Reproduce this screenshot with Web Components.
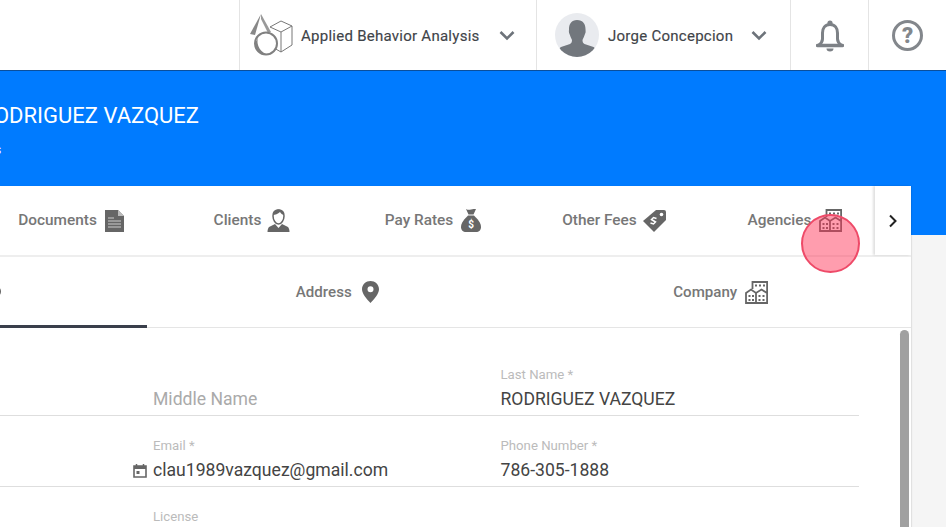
<!DOCTYPE html>
<html><head><meta charset="utf-8">
<style>
html,body{margin:0;padding:0;width:946px;height:527px;overflow:hidden;background:#f5f5f5;font-family:Roboto,"Liberation Sans",sans-serif}
</style></head><body>
<app-topbar></app-topbar>
<app-main></app-main>
<script>
const define=(name,html)=>{customElements.define(name,class extends HTMLElement{constructor(){super();this.attachShadow({mode:'open'}).innerHTML=html;}});};

const chev='<svg width="16" height="11" viewBox="0 0 16 11"><path d="M1.500 2 8 8.500 14.500 2" fill="none" stroke="#6d737a" stroke-width="2.600"/></svg>';
define('app-topbar',`<style>
:host{display:flex;justify-content:flex-end;height:71px;box-sizing:border-box;background:#fff;border-bottom:1px solid #0a4f9c}
.i{display:flex;align-items:center;border-left:1px solid #e4e4e4;box-sizing:border-box;height:70px}
.t{font:400 15px Roboto,sans-serif;color:#3f4449;letter-spacing:.26px;white-space:nowrap;margin-top:2px;-webkit-text-stroke:.15px #3f4449}
.a{width:297px;padding-left:10px}.b{width:254px;padding-left:18px}.c{width:78px;justify-content:center}.d{width:78px;justify-content:center}
.h{width:31px;height:31px;box-sizing:border-box;border:3px solid #83878c;border-radius:50%;display:flex;align-items:center;justify-content:center;font:900 22px Roboto,sans-serif;color:#83878c;margin-top:1px}
</style>
<div class="i a">
<svg width="43" height="42" viewBox="0 0 43 42" style="margin-right:8px"><g fill="none" stroke="#777" stroke-width="1"><path d="M20 13 31 7l11 5v19l-11 7-7-4"/><path d="M20 13l11 5 11-6M31 18v20"/></g><path d="M11 0 0 20l5 1z" fill="#888"/><path d="M11 0l10 18-3 1L11 5z" fill="#999"/><circle cx="16" cy="29.500" r="11" fill="#fff" stroke="#808080" stroke-width="2"/><path d="M5 29a12 12 0 0 0 14 11.500A13 13 0 0 1 8 24z" fill="#808080"/></svg>
<span class="t">Applied Behavior Analysis</span><span style="margin-left:19px;display:flex">${chev}</span></div>
<div class="i b">
<svg width="44" height="44" viewBox="0 0 44 44" style="margin-right:9px"><defs><clipPath id="k"><circle cx="22" cy="22" r="22"/></clipPath></defs><circle cx="22" cy="22" r="22" fill="#e9ebef"/><g clip-path="url(#k)"><path d="M22 7c6 0 8.500 4 8.500 9 0 2 .5 3-.5 5-.7 2-1.500 4-2.500 6 0 2 .5 3 2 4l9 3c2 1 3 4 3 10H3c0-6 1-9 3-10l9-3c1.500-1 2-2 2-4-1-2-1.800-4-2.500-6-1-2-.5-3-.5-5 0-5 2.500-9 8-9z" fill="#72777d"/></g></svg>
<span class="t">Jorge Concepcion</span><span style="margin-left:18px;display:flex">${chev}</span></div>
<div class="i c"><svg width="28" height="32" viewBox="0 0 28 32" style="margin-top:1px"><path d="M14 4.500c-5 0-7.500 3.500-7.500 8.500v6c0 2.500-1.500 4.500-4 6.500h23c-2.500-2-4-4-4-6.500v-6c0-5-2.500-8.500-7.500-8.500z" fill="none" stroke="#7d8186" stroke-width="3" stroke-linejoin="round"/><circle cx="14" cy="3" r="2.600" fill="#7d8186"/><path d="M1.500 25.500h25" stroke="#7d8186" stroke-width="3.400" stroke-linecap="round"/><path d="M10.500 28.500h7a3.500 3 0 0 1-7 0z" fill="#7d8186"/></svg></div>
<div class="i d"><div class="h">?</div></div>`);

define('tab-item',`<style>
:host{display:flex;align-items:center;justify-content:center;gap:8px;flex:none;box-sizing:border-box;font:500 15.400px Roboto,sans-serif;color:#777;height:100%}
</style><slot></slot>`);

define('text-field',`<style>
:host{display:block;height:71px;box-sizing:border-box;padding-top:23px;border-bottom:1px solid #dedede;font-family:Roboto,sans-serif}
.l{font-size:13.200px;line-height:14px;color:#bbb;height:14px}
.v{font-size:17.600px;line-height:20px;color:#444;margin-top:7px;white-space:nowrap}
</style><div class="l"><slot name="label"></slot></div><div class="v"><slot></slot></div>`);

const building=(c)=>`<svg width="23" height="23" viewBox="0 0 23 23"><g fill="none" stroke="${c}" stroke-width="1.800"><path d="M7.500 8V1h14.600v21H1V12l5-3.500 5 3.500 5.500-3.500 5.500 3.500M11 12v10"/></g><g fill="${c}"><rect x="10" y="3.500" width="2" height="2"/><rect x="14" y="3.500" width="2" height="2"/><rect x="18" y="3.500" width="2" height="2"/><rect x="3.500" y="14" width="2" height="2"/><rect x="7" y="14" width="2" height="2"/><rect x="3.500" y="18" width="2" height="2"/><rect x="7" y="18" width="2" height="2"/><rect x="13.500" y="14" width="2" height="2"/><rect x="17.500" y="14" width="2" height="2"/><rect x="13.500" y="18" width="2" height="2"/><rect x="17.500" y="18" width="2" height="2"/></g></svg>`;

define('app-main',`<style>
:host{display:block;height:456px;overflow:hidden;background:linear-gradient(#007bff 0,#007bff 164px,#f5f5f5 164px);position:relative}
.title{height:115px;width:199px;display:flex;flex-direction:column;align-items:flex-end;overflow:hidden;color:#fff}
.name{font:400 22px/24px Roboto,sans-serif;margin-top:33px;white-space:nowrap}
.sub{font:12px/14px Roboto,sans-serif;align-self:flex-start;margin:15px 0 0 -5px}
.card{width:911px;height:341px;background:#fff;box-shadow:1px 0 1px rgba(0,0,0,.08);position:relative}
.tabs{display:flex;height:69px;border-bottom:2px solid #eee;box-sizing:content-box}
.track{width:875px;overflow:hidden;display:flex;height:69px}
.track tab-item{width:181px;padding-bottom:2px}
.track svg{margin-top:2px}
.track tab-item:first-child{margin-left:-19.500px}
.track .tight{gap:6px}
.more{width:36px;height:69px;box-sizing:border-box;box-shadow:-2px 0 2px rgba(0,0,0,.12);display:flex;align-items:center;justify-content:center}
.sub-tabs{display:flex;height:71px;border-bottom:1px solid #e5e5e5;box-sizing:border-box}
.sub-tabs tab-item{width:382.500px;font-size:15.100px}
.sub-tabs .addr{gap:10px;padding-right:2px}
.first{width:147px;height:71px;box-sizing:border-box;border-bottom:3px solid #3a3f4b;margin-bottom:-1px;display:flex;align-items:center;overflow:hidden;flex:none}
.first i{display:block;width:11px;height:11px;border-radius:50%;border:2px solid #666;margin:0 0 0 -10px;box-sizing:border-box}
.form{display:grid;grid-template-columns:153px 347.500px 358.500px;padding-top:17px;height:199px;box-sizing:border-box;overflow:hidden;position:relative}
.lead{border-bottom:1px solid #dedede;height:71px;box-sizing:border-box}
.cal-i{position:absolute;left:133px;top:135px}
.bar{position:absolute;left:900px;top:2px;width:9px;height:240px;border-radius:5px 5px 0 0;background:#a0a0a0}
.dot{position:absolute;left:801px;top:143px;width:59px;height:59px;box-sizing:border-box;border-radius:50%;background:rgba(255,50,85,.48);border:2px solid #ee4a68}
</style>
<div class="title"><div class="name">JENNIFER RODRIGUEZ VAZQUEZ</div><div class="sub">s</div></div>
<div class="card">
<div class="tabs"><div class="track">
<tab-item>Documents <svg width="19" height="22" viewBox="0 0 19 22"><path d="M0 0h13l6 6v16H0z" fill="#666"/><path d="M13 0v6h6" fill="#bbb"/><path d="M3 8h6M3 11h13M3 14h13M3 17h13" stroke="#ccc" stroke-width="1.200"/></svg></tab-item>
<tab-item class="tight">Clients <svg width="23" height="23" viewBox="0 0 23 23"><path d="M11.500 1c4 0 5.500 3 5.500 6 0 4-2.500 8-5.500 8S6 11 6 7c0-3 1.500-6 5.500-6z" fill="#fff" stroke="#666" stroke-width="1.500"/><path d="M6 6c2 0 5-1 7-3 1 2 3 3 4 3 0-3-2-5.500-5.500-5.500S6 3 6 6z" fill="#666"/><path d="M8 15l-6 3c-1 1-1.500 3-1.500 5h22c0-2-.5-4-1.500-5l-6-3-3.500 4z" fill="#666"/></svg></tab-item>
<tab-item>Pay Rates <svg width="20" height="23" viewBox="0 0 20 23"><path d="M5 0c2 1 3 1 5 .5 2-.5 3-.5 5-.5l-2.500 5.500h-5z" fill="#666"/><path d="M7 6.500h6c3 3 7 7 7 11.500 0 3-2 5-5 5H5c-3 0-5-2-5-5 0-4.500 4-8.500 7-11.500z" fill="#666"/><text x="10" y="19" font-family="Roboto" font-size="10" font-weight="700" fill="#fff" text-anchor="middle">$</text></svg></tab-item>
<tab-item class="tight">Other Fees <svg width="23" height="22" viewBox="0 0 23 22"><path d="M13 0h8a2 2 0 0 1 2 2v8L11 22 0 11z" fill="#666"/><circle cx="18.500" cy="4.500" r="1.800" fill="#fff"/><path d="M13.500 8.500l-3-1-2 2 4 2.500-2 2-3-1" fill="none" stroke="#fff" stroke-width="1.500"/></svg></tab-item>
<tab-item>Agencies ${building('#666')}</tab-item>
</div><div class="more"><svg style="margin:0" width="10" height="14" viewBox="0 0 10 14"><path d="M2 1.500 7.500 7 2 12.500" fill="none" stroke="#222" stroke-width="2"/></svg></div></div>
<div class="sub-tabs"><div class="first"><i></i></div>
<tab-item class="addr">Address <svg width="17" height="22" viewBox="0 0 17 22"><path fill-rule="evenodd" d="M8.500 0C13 0 17 3.500 17 8.200 17 13 12 18 8.500 22 5 18 0 13 0 8.200 0 3.500 4 0 8.500 0zm0 5.200a3 3 0 1 0 0 6 3 3 0 0 0 0-6z" fill="#666"/></svg></tab-item>
<tab-item>Company ${building('#666')}</tab-item></div>
<div class="form">
<div class="lead"></div><text-field><span slot="label">&nbsp;</span><span style="color:#aaa">Middle Name</span></text-field><text-field style="width:358.500px"><span slot="label">Last Name *</span>RODRIGUEZ VAZQUEZ</text-field>
<div class="lead"></div><text-field><span slot="label">Email *</span>clau1989vazquez@gmail.com</text-field><text-field style="width:358.500px"><span slot="label">Phone Number *</span>786-305-1888</text-field>
<div></div><text-field><span slot="label">License</span></text-field><div></div>
<svg class="cal-i" width="14" height="15" viewBox="0 0 14 15"><path d="M1 3h12v11H1z" fill="none" stroke="#666" stroke-width="1.600"/><path d="M1 3h12v3H1z" fill="#666"/><path d="M3.500 1v3M10.500 1v3" stroke="#666" stroke-width="1.500"/><rect x="3.500" y="8" width="3" height="3" fill="#666"/></svg>
<div class="bar"></div>
</div></div>
<div class="dot"></div>`);
</script></body></html>
